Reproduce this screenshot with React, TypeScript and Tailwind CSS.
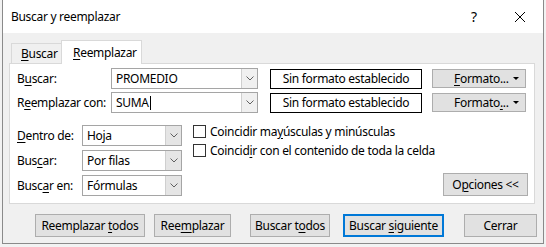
import React from "react";

const F = { fontFamily: '"Noto Sans", "Open Sans", sans-serif', letterSpacing: "-0.3px" };

function U({ children }: { children: React.ReactNode }) {
  return <span className="underline underline-offset-2 decoration-1">{children}</span>;
}

function Chevron() {
  return (
    <svg width="8" height="5" viewBox="0 0 8 5" className="block">
      <path d="M0.5 0.5 L4 4 L7.5 0.5" fill="none" stroke="#606060" strokeWidth="1" />
    </svg>
  );
}

function Combo({ value, w, cursor, gray }: { value: string; w: string; cursor?: boolean; gray?: boolean }) {
  return (
    <div className={`flex h-[21px] ${w} border border-[#a5a5a5] bg-white`}>
      <div className="flex flex-1 items-center pl-[4px] text-[12px] text-black">
        {value}
        {cursor && <span className="ml-[1px] inline-block h-[14px] w-[1px] bg-black" />}
      </div>
      <div className={`flex w-[16px] items-center justify-center border-l border-[#cfcfcf] ${gray ? "bg-[#e5e5e5]" : "bg-[#f0f0f0]"}`}>
        <Chevron />
      </div>
    </div>
  );
}

function Btn({ children, w, primary }: { children: React.ReactNode; w: string; primary?: boolean }) {
  return (
    <div
      className={`flex h-[23px] ${w} items-center justify-center bg-[#e1e1e1] text-[12px] text-black ${
        primary ? "border-2 border-[#0078d7]" : "border border-[#adadad]"
      }`}
    >
      {children}
    </div>
  );
}

function FormatoBtn({ children }: { children: React.ReactNode }) {
  return (
    <div className="flex h-[19px] w-[94px] items-center border border-[#adadad] bg-[#e1e1e1] text-[12px] text-black">
      <div className="flex-1 pl-[21px]">{children}</div>
      <svg width="6" height="3" viewBox="0 0 6 3" className="mr-[6px]">
        <path d="M0 0 L6 0 L3 3 Z" fill="#000" />
      </svg>
    </div>
  );
}

function Check({ children }: { children: React.ReactNode }) {
  return (
    <div className="flex h-[19px] items-center">
      <div className="h-[13px] w-[13px] border border-[#333333] bg-white" />
      <div className="ml-[4px] text-[12px] text-black">{children}</div>
    </div>
  );
}

export default function App() {
  return (
    <div className="h-[247px] w-[546px] bg-[#f2f2f2] pl-[2px]" style={F}>
      <div className="flex h-[244px] w-[542px] flex-col border-b border-l border-r border-[#8a8a8a] bg-[#f0f0f0]">
        {/* title bar */}
        <div className="flex h-[33px] items-center bg-white">
          <div className="ml-[8px] flex-1 text-[12px] text-black">Buscar y reemplazar</div>
          <div className="flex h-[33px] w-[46px] items-center justify-center text-[14px] text-black">?</div>
          <div className="flex h-[33px] w-[46px] items-center justify-center">
            <svg width="12" height="12" viewBox="0 0 12 12">
              <path d="M1 1 L11 11 M11 1 L1 11" stroke="#000" strokeWidth="1" fill="none" />
            </svg>
          </div>
        </div>
        {/* tabs */}
        <div className="mt-[7px] flex h-[23px] items-end pl-[8px]">
          <div className="flex h-[20px] w-[50px] items-center border-l border-t border-[#d9d9d9] pl-[9px] text-[12px] text-black">
            <span>
              <U>B</U>uscar
            </span>
          </div>
          <div className="relative z-10 -mb-[1px] flex h-[24px] w-[81px] items-center border-l border-r border-t border-[#d9d9d9] bg-white pl-[11px] text-[12px] text-black">
            <span>
              <U>R</U>eemplazar
            </span>
          </div>
        </div>
        {/* panel */}
        <div className="ml-[6px] flex h-[141px] w-[526px] flex-col border border-[#d9d9d9] bg-white pl-[7px] pt-[4px]">
          <div className="flex items-center">
            <div className="w-[94px] text-[12px] text-black">
              B<U>u</U>scar:
            </div>
            <Combo value="PROMEDIO" w="w-[147px]" />
            <div className="ml-[12px] flex h-[20px] w-[152px] items-center justify-center border border-black text-[12px] text-black">
              Sin formato establecido
            </div>
            <div className="ml-[10px]">
              <FormatoBtn>
                <U>F</U>ormato...
              </FormatoBtn>
            </div>
          </div>
          <div className="mt-[3px] flex items-center">
            <div className="w-[94px] text-[12px] text-black">
              R<U>e</U>emplazar con:
            </div>
            <Combo value="SUMA" w="w-[147px]" cursor />
            <div className="ml-[12px] flex h-[20px] w-[152px] items-center justify-center border border-black text-[12px] text-black">
              Sin formato establecido
            </div>
            <div className="ml-[10px]">
              <FormatoBtn>
                Formato<U>.</U>..
              </FormatoBtn>
            </div>
          </div>
          <div className="mt-[12px] flex">
            <div className="flex flex-col gap-[4px]">
              <div className="flex items-center">
                <div className="w-[65px] text-[12px] text-black">
                  <U>D</U>entro de:
                </div>
                <Combo value="Hoja" w="w-[100px]" gray />
              </div>
              <div className="flex items-center">
                <div className="w-[65px] text-[12px] text-black">
                  Bus<U>c</U>ar:
                </div>
                <Combo value="Por filas" w="w-[100px]" gray />
              </div>
              <div className="flex items-center">
                <div className="w-[65px] text-[12px] text-black">
                  Busc<U>a</U>r en:
                </div>
                <Combo value="Fórmulas" w="w-[100px]" gray />
              </div>
            </div>
            <div className="-mt-[3px] ml-[11px] flex flex-1 flex-col">
              <Check>
                Coincidir ma<U>y</U>úsculas y minúsculas
              </Check>
              <Check>
                Coincid<U>i</U>r con el contenido de toda la celda
              </Check>
              <div className="mt-auto flex justify-end pr-[6px]">
                <Btn w="w-[85px]">
                  <span>
                    O<U>p</U>ciones &lt;&lt;
                  </span>
                </Btn>
              </div>
            </div>
          </div>
        </div>
        {/* bottom buttons */}
        <div className="mt-[10px] flex pl-[32px]">
          <Btn w="w-[110px]">
            <span>
              Reemplazar <U>t</U>odos
            </span>
          </Btn>
          <div className="ml-[9px]">
            <Btn w="w-[77px]">
              <span>
                Ree<U>m</U>plazar
              </span>
            </Btn>
          </div>
          <div className="ml-[19px]">
            <Btn w="w-[80px]">
              <span>
                Buscar t<U>o</U>dos
              </span>
            </Btn>
          </div>
          <div className="ml-[13px]">
            <Btn w="w-[101px]" primary>
              <span>
                Buscar <U>s</U>iguiente
              </span>
            </Btn>
          </div>
          <div className="ml-[20px]">
            <Btn w="w-[73px]">Cerrar</Btn>
          </div>
        </div>
      </div>
    </div>
  );
}
